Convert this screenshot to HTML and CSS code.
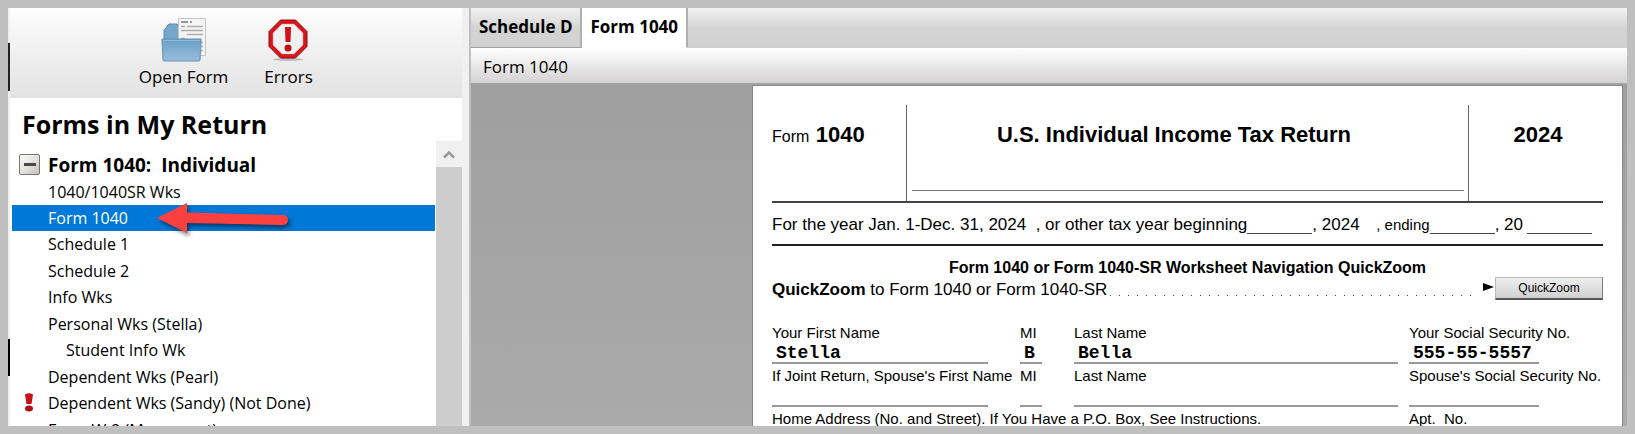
FILE: index.html
```
<!DOCTYPE html>
<html lang="en">
<head>
  <meta charset="UTF-8" />
  <meta name="viewport" content="width=device-width, initial-scale=1.0" />
  <title>Forms in My Return</title>
  <link rel="stylesheet" href="styles.css">
</head>
<body>
  <div class="app">
    <div class="edge"></div>

    <aside class="sidebar">
      <div class="toolbar">
        <button class="tool">
          <svg width="46" height="46" viewBox="0 0 46 46">
            <defs>
              <linearGradient id="front" x1="0" y1="0" x2="0" y2="1">
                <stop offset="0" stop-color="#6a9ec6" />
                <stop offset="1" stop-color="#9abddb" />
              </linearGradient>
            </defs>
            <path d="M3 24V13l3-3V9l2-2h8l2 3h6v14z" fill="#76a6ca" stroke="#5b8db3" />
            <path d="M17.5 1.500h27v37h-27z" fill="#f4f4f4" stroke="#c4c4c4" />
            <path d="M20 5h7M29 5h2" stroke="#999" stroke-width="2" />
            <path d="M20 9.500h4M26 9.500h16M20 13.500h22M26 17.500h16M20 21.500h4M38 25.500h4M38 29.500h4M38 33.500h4" stroke="#adadad" stroke-width="1.500" />
            <path d="M1 22h39v3l-1 18q0 1-1 1H3q-1 0-1-1L1 25z" fill="url(#front)" stroke="#6393b8" />
            <path d="M2 23.500h37" stroke="#8fb8d6" />
          </svg>
          <span>Open Form</span>
        </button>
        <button class="tool">
          <svg width="46" height="46" viewBox="0 0 46 46">
            <ellipse cx="22" cy="42.500" rx="15" ry="1.500" fill="#bdbdbd" />
            <path d="M14.500 3h15L41 14.500v15L29.500 41h-15L3 29.500v-15z" fill="#d8161c" stroke="#7d1518" />
            <path d="M16 7h12l9 9v12l-9 9H16l-9-9V16z" fill="#f1f1f1" stroke="#f88" stroke-width=".5" />
            <path d="M19 10h6l-.5 15h-5z" fill="#d0121b" />
            <circle cx="22" cy="31" r="3.500" fill="#b80e17" />
          </svg>
          <span>Errors</span>
        </button>
      </div>

      <h1>Forms in My Return</h1>

      <div class="tree">
        <div class="tree-body">
          <div class="group">
            <button class="toggle" aria-label="Collapse"></button>
            <h2>Form 1040:&nbsp; Individual</h2>
          </div>
          <ul>
            <li><a href="#">1040/1040SR Wks</a></li>
            <li class="selected">
              <a href="#">Form 1040</a>
              <svg class="pointer" width="140" height="40" viewBox="0 0 140 40">
                <path d="M5 18L35 3v9.500L130 15q6 0 6 5t-6 5L35 23v10z" fill="#ff4040" />
              </svg>
            </li>
            <li><a href="#">Schedule 1</a></li>
            <li><a href="#">Schedule 2</a></li>
            <li><a href="#">Info Wks</a></li>
            <li><a href="#">Personal Wks (Stella)</a></li>
            <li class="sub"><a href="#">Student Info Wk</a></li>
            <li><a href="#">Dependent Wks (Pearl)</a></li>
            <li>
              <svg class="alert" width="10" height="19" viewBox="0 0 10 19">
                <path d="M1 1.500Q5-1 9 1.500L7.500 11h-5z" fill="#c8101a" />
                <ellipse cx="5" cy="15.500" rx="4" ry="3" fill="#b00d16" />
              </svg>
              <a href="#">Dependent Wks (Sandy) (Not Done)</a>
            </li>
            <li><a href="#">Form W-2 (Monument)</a></li>
          </ul>
        </div>
        <div class="scrollbar">
          <button aria-label="Scroll up">
            <svg width="12" height="9" viewBox="0 0 12 9"><path d="M1 7.500l5-5 5 5" fill="none" stroke="#9a9a9a" stroke-width="2.500" /></svg>
          </button>
        </div>
      </div>
    </aside>

    <main class="viewer">
      <nav class="tabs">
        <button class="tab">Schedule D</button>
        <button class="tab active">Form 1040</button>
      </nav>
      <div class="form-name">Form 1040</div>

      <div class="desk">
        <form class="paper">
          <header class="form-head">
            <div class="form-no">Form <b>1040</b></div>
            <div class="form-title"><span>U.S. Individual Income Tax Return</span></div>
            <div class="form-year">2024</div>
          </header>

          <div class="tax-year">
            <label for="begin">For the year Jan. 1-Dec. 31, 2024&nbsp; , or other tax year beginning</label>
            <input id="begin" type="text">
            <span>, 2024</span>
            <label class="ending" for="end">, ending</label>
            <input id="end" type="text">
            <label for="yy">, 20</label>
            <input id="yy" class="yy" type="text">
          </div>

          <div class="nav-title">Form 1040 or Form 1040-SR Worksheet Navigation QuickZoom</div>
          <div class="quickzoom">
            <span><b>QuickZoom</b> to Form 1040 or Form 1040-SR</span>
            <span class="leader"></span>
            <svg width="12" height="8" viewBox="0 0 12 8"><path d="M1 0l11 4-11 4z" /></svg>
            <button type="button">QuickZoom</button>
          </div>

          <div class="fields">
            <div class="field"><label for="first">Your First Name</label><input id="first" type="text" value="Stella"></div>
            <div class="field"><label for="mi">MI</label><input id="mi" type="text" value="B"></div>
            <div class="field"><label for="last">Last Name</label><input id="last" type="text" value="Bella"></div>
            <div class="field"><label for="ssn">Your Social Security No.</label><input id="ssn" type="text" value="555-55-5557"></div>

            <div class="field"><label for="sp-first">If Joint Return, Spouse's First Name</label><input id="sp-first" type="text"></div>
            <div class="field"><label for="sp-mi">MI</label><input id="sp-mi" type="text"></div>
            <div class="field"><label for="sp-last">Last Name</label><input id="sp-last" type="text"></div>
            <div class="field"><label for="sp-ssn">Spouse's Social Security No.</label><input id="sp-ssn" type="text"></div>

            <div class="field wide"><label for="street">Home Address (No. and Street). If You Have a P.O. Box, See Instructions.</label><input id="street" type="text"></div>
            <div class="field"><label for="apt">Apt.&nbsp; No.</label><input id="apt" type="text"></div>
          </div>
        </form>
      </div>
    </main>
  </div>
</body>
</html>
```
FILE: styles.css
```
* {
  box-sizing: border-box;
}
body {
  margin: 0;
  height: 100vh;
  padding: 8px;
  background: #bfbfbf;
  color: #000;
  font-family: 'Segoe UI', 'Open Sans', sans-serif;
  font-size: 16px;
  overflow: hidden;
}
button {
  font: inherit;
  color: inherit;
  border: 0;
  padding: 0;
  background: none;
  cursor: pointer;
}
a {
  color: inherit;
  text-decoration: none;
}
.app {
  display: flex;
  height: 100%;
  background: #f0f0f0;
  overflow: hidden;
}

/* Window edge left of the sidebar */
.edge {
  width: 2px;
  background: linear-gradient(#f0f0f0 35px, #222 35px, #222 83px, #f0f0f0 83px, #f0f0f0 331px, #000 331px, #000 368px, #f0f0f0 368px);
}

/* Sidebar */
.sidebar {
  width: 452px;
  display: flex;
  flex-direction: column;
  background: #fff;
}
.toolbar {
  height: 90px;
  display: flex;
  justify-content: center;
  gap: 16px;
  padding-top: 9px;
  background: linear-gradient(#fdfdfd, #e2e2e2);
  flex-shrink: 0;
}
.tool {
  width: 89px;
  display: flex;
  flex-direction: column;
  align-items: center;
  white-space: nowrap;
  font-size: 17px;
  line-height: 24px;
}
.tool span {
  margin-top: 2px;
}
h1 {
  margin: 0;
  padding: 8px 12px 0;
  height: 43px;
  font-size: 25px;
  line-height: 36px;
  flex-shrink: 0;
}
.tree {
  flex: 1;
  min-height: 0;
  display: flex;
}
.tree-body {
  flex: 1;
  padding: 0 1px 0 2px;
  overflow: hidden;
}
.group {
  display: flex;
  align-items: center;
  gap: 8px;
  height: 38px;
  padding: 10px 0 0 7px;
}
h2 {
  margin: 0;
  font-size: 19px;
  line-height: 24px;
}
.toggle {
  width: 21px;
  height: 21px;
  margin-bottom: 2px;
  display: flex;
  align-items: center;
  justify-content: center;
  border: 1px solid #777;
  border-radius: 2px;
  background: linear-gradient(135deg, #fff, #c9c4bb);
}
.toggle::before {
  content: "";
  width: 12px;
  height: 3px;
  background: #4a4a4a;
}
ul {
  list-style: none;
  margin: 0;
  padding: 0;
}
li {
  position: relative;
  height: 26px;
  padding-left: 36px;
  line-height: 27px;
  white-space: nowrap;
}
li:nth-child(2n + 3) {
  height: 27px;
}
li.sub {
  padding-left: 54px;
}
li.selected {
  background: #0078d7;
  color: #fff;
}
.pointer {
  position: absolute;
  left: 140px;
  top: -5px;
  z-index: 1;
  filter: drop-shadow(2px 3px 2px rgba(0,0,0,0.5));
}
.alert {
  position: absolute;
  left: 12px;
  top: 3px;
}
.scrollbar {
  width: 26px;
  background: #cdcdcd;
}
.scrollbar button {
  width: 26px;
  height: 26px;
  display: flex;
  align-items: center;
  justify-content: center;
  background: #f0f0f0;
}

/* Viewer */
.viewer {
  flex: 1;
  min-width: 0;
  margin-left: 7px;
  display: flex;
  flex-direction: column;
  border-left: 2px solid #bfbfbf;
}
.tabs {
  height: 40px;
  display: flex;
  background: linear-gradient(#f2f2f2, #d4d4d4 50%, #d0d0d0);
  flex-shrink: 0;
}
.tab {
  padding: 0 8px 2px;
  border-right: 2px solid #b0b0b0;
  border-bottom: 1px solid #a0a0a0;
  font-size: 17px;
  font-weight: bold;
}
.tab.active {
  background: #fff;
  border-bottom-color: #fff;
}
.form-name {
  height: 37px;
  padding-left: 12px;
  line-height: 37px;
  font-size: 17px;
  background: linear-gradient(#fff, #d4d2d2);
  border-bottom: 2px solid #a4a4a4;
  flex-shrink: 0;
}
.desk {
  flex: 1;
  min-height: 0;
  padding: 0 4px 0 281px;
  background: linear-gradient(#9f9f9f, #aaa);
}

/* Form page */
.paper {
  border: 1px solid #888;
  background: #fff;
  padding: 19px 19px 0 19px;
  font-family: Univers, 'Liberation Sans', Arial, sans-serif;
  height: 500px;
}
.form-head {
  display: grid;
  grid-template-columns: 134fr 562fr 134fr;
  height: 98px;
  border-bottom: 2px solid #444;
  line-height: 60px;
}
.form-no b,
.form-title,
.form-year {
  font-size: 22px;
  font-weight: bold;
}
.form-no b {
  margin-left: 2px;
}
.form-title {
  display: flex;
  flex-direction: column;
  align-items: center;
  border-left: 1px solid #666;
  border-right: 1px solid #666;
  padding: 0 4px 0 5px;
}
.form-title span {
  padding-right: 28px;
}
.form-title::after {
  content: "";
  width: 100%;
  height: 1px;
  margin-top: 25px;
  background: #777;
}
.form-year {
  padding-left: 4px;
  text-align: center;
}
.paper input {
  min-width: 0;
  border: 0;
  border-bottom: 1px solid #444;
  border-radius: 0;
  outline: 0;
  background: none;
}
.tax-year {
  display: flex;
  align-items: center;
  height: 43px;
  padding-top: 2px;
  border-bottom: 2px solid #222;
  font-size: 17px;
  white-space: nowrap;
}
.tax-year input {
  width: 65px;
  height: 18px;
}
.tax-year .ending {
  margin-left: auto;
  font-size: 15px;
}
.tax-year .yy {
  margin: 0 11px 0 4px;
}
.nav-title {
  padding-top: 12px;
  text-align: center;
  font-weight: bold;
  line-height: 20px;
}
.quickzoom {
  display: flex;
  align-items: center;
  height: 24px;
  font-size: 17px;
}
.leader {
  flex: 1;
  height: 1px;
  margin: 10px 6px 0 3px;
  background: repeating-linear-gradient(90deg, #444 0 1px, transparent 1px 9px);
}
.quickzoom svg {
  margin-bottom: 6px;
}
.quickzoom button {
  width: 108px;
  height: 23px;
  margin: 0 0 4px 1px;
  font-size: 12px;
  background: linear-gradient(#eee, #d0d0d0);
  border: 1px solid #bbb;
  border-right-color: #777;
  border-bottom: 2px solid #555;
}
.fields {
  display: grid;
  grid-template-columns: 248fr 54fr 335fr 194fr;
  padding-top: 19px;
}
.field {
  min-width: 0;
  height: 43px;
  display: flex;
  flex-direction: column;
  white-space: nowrap;
  font-size: 15px;
}
.field.wide {
  grid-column: span 3;
}
.field label {
  line-height: 23px;
}
.paper .field input {
  height: 20px;
  margin-right: 32px;
  padding: 0 4px;
  border-bottom: 2px solid #999;
  font-family: 'Courier New', 'Liberation Mono', monospace;
  font-size: 18px;
  font-weight: bold;
}
.paper .field:nth-child(4n + 3) input {
  margin-right: 11px;
}
.paper .field:nth-child(4n) input {
  margin-right: 64px;
}
```
